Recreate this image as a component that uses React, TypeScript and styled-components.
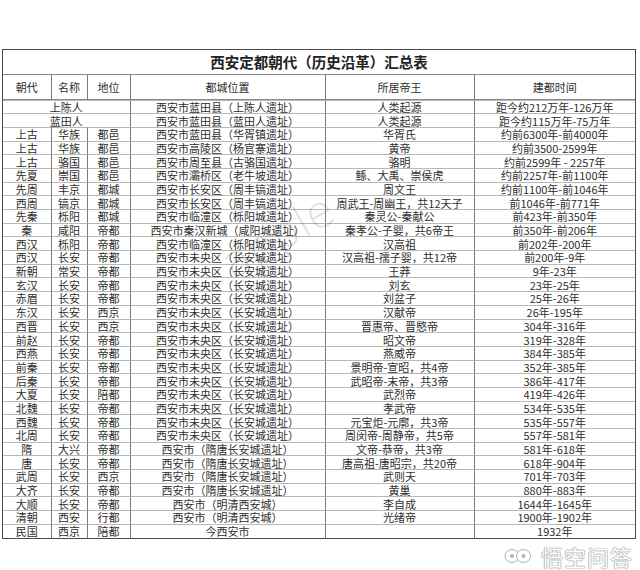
import React from 'react';
import styled, { createGlobalStyle } from 'styled-components';

const GlobalStyle = createGlobalStyle`
  html, body {
    margin: 0;
    padding: 0;
    background: #ffffff;
  }
  body {
    font-family: "Noto Sans CJK SC", "Noto Sans", sans-serif;
    color: #333;
  }
`;

type Row = {
  era: string;
  name?: string;
  rank?: string;
  place: string;
  king: string;
  time: string;
};

const WEIYANG = '西安市未央区（长安城遗址）';
const SUITANG = '西安市（隋唐长安城遗址）';
const MINGQING = '西安市（明清西安城）';

const rows: Row[] = [
  { era: '上陈人', place: '西安市蓝田县（上陈人遗址）', king: '人类起源', time: '距今约212万年-126万年' },
  { era: '蓝田人', place: '西安市蓝田县（蓝田人遗址）', king: '人类起源', time: '距今约115万年-75万年' },
  { era: '上古', name: '华族', rank: '都邑', place: '西安市蓝田县（华胥镇遗址）', king: '华胥氏', time: '约前6300年-前4000年' },
  { era: '上古', name: '华族', rank: '都邑', place: '西安市高陵区（杨官寨遗址）', king: '黄帝', time: '约前3500-2599年' },
  { era: '上古', name: '骆国', rank: '都邑', place: '西安市周至县（古骆国遗址）', king: '骆明', time: '约前2599年 - 2257年' },
  { era: '先夏', name: '崇国', rank: '都邑', place: '西安市灞桥区（老牛坡遗址）', king: '鲧、大禹、崇侯虎', time: '约前2257年-前1100年' },
  { era: '先周', name: '丰京', rank: '都城', place: '西安市长安区（周丰镐遗址）', king: '周文王', time: '约前1100年-前1046年' },
  { era: '西周', name: '镐京', rank: '都城', place: '西安市长安区（周丰镐遗址）', king: '周武王-周幽王，共12天子', time: '前1046年-前771年' },
  { era: '先秦', name: '栎阳', rank: '都城', place: '西安市临潼区（栎阳城遗址）', king: '秦灵公-秦献公', time: '前423年-前350年' },
  { era: '秦', name: '咸阳', rank: '帝都', place: '西安市秦汉新城（咸阳城遗址）', king: '秦孝公-子婴，共6帝王', time: '前350年-前206年' },
  { era: '西汉', name: '栎阳', rank: '帝都', place: '西安市临潼区（栎阳城遗址）', king: '汉高祖', time: '前202年-200年' },
  { era: '西汉', name: '长安', rank: '帝都', place: WEIYANG, king: '汉高祖-孺子婴，共12帝', time: '前200年-9年' },
  { era: '新朝', name: '常安', rank: '帝都', place: WEIYANG, king: '王莽', time: '9年-23年' },
  { era: '玄汉', name: '长安', rank: '帝都', place: WEIYANG, king: '刘玄', time: '23年-25年' },
  { era: '赤眉', name: '长安', rank: '帝都', place: WEIYANG, king: '刘盆子', time: '25年-26年' },
  { era: '东汉', name: '长安', rank: '西京', place: WEIYANG, king: '汉献帝', time: '26年-195年' },
  { era: '西晋', name: '长安', rank: '西京', place: WEIYANG, king: '晋惠帝、晋愍帝', time: '304年-316年' },
  { era: '前赵', name: '长安', rank: '帝都', place: WEIYANG, king: '昭文帝', time: '319年-328年' },
  { era: '西燕', name: '长安', rank: '帝都', place: WEIYANG, king: '燕威帝', time: '384年-385年' },
  { era: '前秦', name: '长安', rank: '帝都', place: WEIYANG, king: '景明帝-宣昭，共4帝', time: '352年-385年' },
  { era: '后秦', name: '长安', rank: '帝都', place: WEIYANG, king: '武昭帝-末帝，共3帝', time: '386年-417年' },
  { era: '大夏', name: '长安', rank: '陪都', place: WEIYANG, king: '武烈帝', time: '419年-426年' },
  { era: '北魏', name: '长安', rank: '帝都', place: WEIYANG, king: '孝武帝', time: '534年-535年' },
  { era: '西魏', name: '长安', rank: '帝都', place: WEIYANG, king: '元宝炬-元廓，共3帝', time: '535年-557年' },
  { era: '北周', name: '长安', rank: '帝都', place: WEIYANG, king: '周闵帝-周静帝，共5帝', time: '557年-581年' },
  { era: '隋', name: '大兴', rank: '帝都', place: SUITANG, king: '文帝-恭帝，共3帝', time: '581年-618年' },
  { era: '唐', name: '长安', rank: '帝都', place: SUITANG, king: '唐高祖-唐昭宗，共20帝', time: '618年-904年' },
  { era: '武周', name: '长安', rank: '西京', place: SUITANG, king: '武则天', time: '701年-703年' },
  { era: '大齐', name: '长安', rank: '帝都', place: SUITANG, king: '黄巢', time: '880年-883年' },
  { era: '大顺', name: '长安', rank: '帝都', place: MINGQING, king: '李自成', time: '1644年-1645年' },
  { era: '清朝', name: '西安', rank: '行都', place: MINGQING, king: '光绪帝', time: '1900年-1902年' },
  { era: '民国', name: '西京', rank: '陪都', place: '今西安市', king: '', time: '1932年' },
];

const headers = ['朝代', '名称', '地位', '都城位置', '所居帝王', '建都时间'];

const Page = styled.div`
  position: relative;
  width: 640px;
  height: 570px;
  padding: 49px 0 0 2px;
  box-sizing: border-box;
  overflow: hidden;
`;

const Sheet = styled.div`
  display: grid;
  box-sizing: border-box;
  width: 634px;
  grid-template-columns: 47.5px 36px 43px 195px 149px 1fr;
  grid-template-rows: 24.5px 25px repeat(32, 13.69px);
  border: 1.5px solid #4a4a4a;
`;

const Title = styled.div`
  grid-column: 1 / -1;
  display: flex;
  align-items: center;
  justify-content: center;
  font-size: 14.5px;
  font-weight: 700;
  color: #222;
  border-bottom: 1px solid #8a8a8a;
  box-sizing: border-box;
`;

const Cell = styled.div<{ $first?: boolean; $span?: number; $head?: boolean }>`
  grid-column: ${(p) => (p.$span ? `span ${p.$span}` : 'auto')};
  display: flex;
  align-items: center;
  justify-content: center;
  box-sizing: border-box;
  font-size: 11px;
  line-height: 12px;
  color: #2e2e2e;
  white-space: nowrap;
  border-left: ${(p) => (p.$first ? 'none' : '1px solid #7a7a7a')};
  border-bottom: ${(p) => (p.$head ? '1px solid #8a8a8a' : 'none')};
  border-top: ${(p) => (p.$head ? 'none' : '1px solid #b8b8b8')};
`;

const Watermark = styled.div`
  position: absolute;
  left: 236px;
  top: 242px;
  font-family: "DejaVu Sans", sans-serif;
  font-size: 44px;
  font-weight: 200;
  line-height: 1;
  color: rgba(0, 0, 0, 0.14);
  transform-origin: 0 100%;
  transform: rotate(-30deg);
  pointer-events: none;
`;

const Brand = styled.div`
  position: absolute;
  right: 7px;
  bottom: 2px;
  display: flex;
  align-items: center;
  gap: 9px;
  pointer-events: none;
`;

const BrandText = styled.span`
  font-size: 22px;
  font-weight: 400;
  line-height: 24px;
  color: #ffffff;
  letter-spacing: 1px;
  text-shadow: 0 0 1px #8a8a8a, 0 0 1px #8a8a8a, 0 0 2px #c0c0c0;
`;

const BrandIcon = () => (
  <svg width="28" height="18" viewBox="0 0 28 18">
    <g fill="#ffffff" stroke="#a8a8a8" strokeWidth="0.9">
      <ellipse cx="8" cy="9" rx="7" ry="6.5" />
      <ellipse cx="19.5" cy="9" rx="7" ry="6.5" />
    </g>
    <g fill="#b4b4b4">
      <circle cx="8" cy="9" r="2" />
      <circle cx="19.5" cy="9" r="2" />
    </g>
  </svg>
);

export default function App() {
  return (
    <>
      <GlobalStyle />
      <Page>
        <Sheet>
          <Title>西安定都朝代（历史沿革）汇总表</Title>
          {headers.map((h, i) => (
            <Cell key={h} $head $first={i === 0}>
              {h}
            </Cell>
          ))}
          {rows.map((r, i) => (
            <React.Fragment key={i}>
              {r.name === undefined ? (
                <Cell $first $span={3}>
                  {r.era}
                </Cell>
              ) : (
                <>
                  <Cell $first>{r.era}</Cell>
                  <Cell>{r.name}</Cell>
                  <Cell>{r.rank}</Cell>
                </>
              )}
              <Cell>{r.place}</Cell>
              <Cell>{r.king}</Cell>
              <Cell>{r.time}</Cell>
            </React.Fragment>
          ))}
        </Sheet>
        <Watermark>apple</Watermark>
        <Brand>
          <BrandIcon />
          <BrandText>悟空问答</BrandText>
        </Brand>
      </Page>
    </>
  );
}
